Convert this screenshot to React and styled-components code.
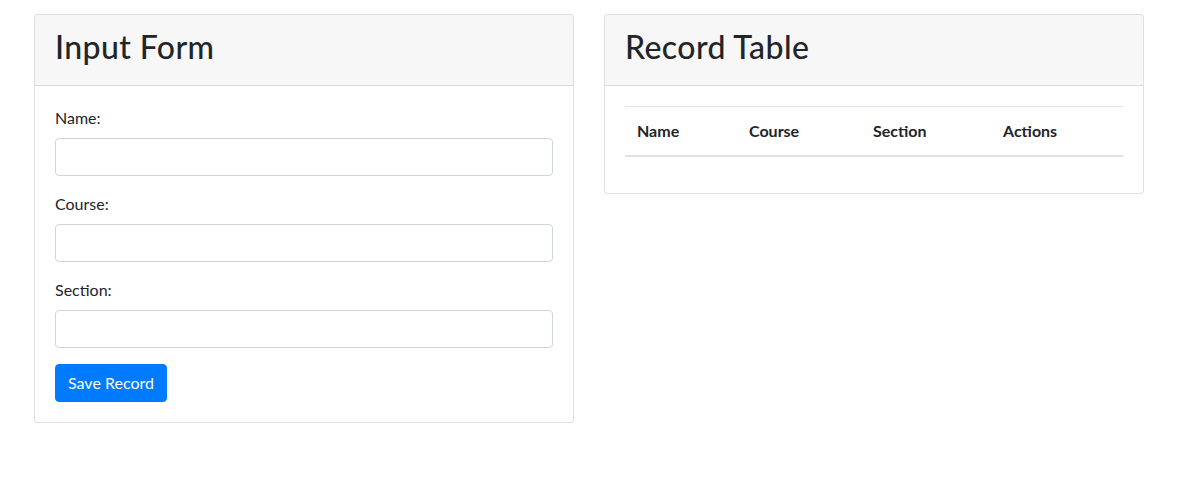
import React from "react";
import styled, { createGlobalStyle } from "styled-components";

const Global = createGlobalStyle`
  * { box-sizing: border-box; }
  body {
    margin: 0;
    font-family: "Segoe UI", Lato, sans-serif;
    font-size: 16px;
    line-height: 1.5;
    color: #212529;
    background: #fff;
  }
`;

const Container = styled.div`
  width: 1140px;
  padding: 14px 15px 0;
  margin-left: 19px;
`;

const Row = styled.div`
  display: grid;
  grid-template-columns: 540px 540px;
  column-gap: 30px;
  align-items: start;
`;

const Card = styled.div`
  border: 1px solid rgba(0, 0, 0, 0.125);
  border-radius: 4px;
  background: #fff;
  overflow: hidden;
`;

const CardHeader = styled.div`
  background: rgba(0, 0, 0, 0.03);
  border-bottom: 1px solid rgba(0, 0, 0, 0.125);
  padding: 13px 20px 11px;
`;

const Title = styled.h2`
  margin: 0 0 8px;
  font-size: 32px;
  font-weight: 500;
  letter-spacing: 0.4px;
  line-height: 1.2;
`;

const CardBody = styled.div`
  padding: 20px;
`;

const FormGroup = styled.div`
  margin-bottom: 16px;
`;

const Label = styled.label`
  display: block;
  margin-bottom: 8px;
  font-size: 16px;
`;

const Input = styled.input`
  display: block;
  width: 100%;
  height: 38px;
  padding: 6px 12px;
  font: inherit;
  border: 1px solid #ced4da;
  border-radius: 4px;
  color: #495057;
  outline: none;
`;

const Button = styled.button`
  display: inline-block;
  height: 38px;
  padding: 6px 12px;
  font: inherit;
  color: #fff;
  background: #007bff;
  border: 1px solid #007bff;
  border-radius: 4px;
  cursor: pointer;
`;

const Table = styled.table`
  width: 100%;
  margin-bottom: 16px;
  border-collapse: collapse;
  color: #212529;
`;

const Th = styled.th`
  width: ${(p) => p.$w}px;
  padding: 12px;
  text-align: left;
  font-weight: 700;
  vertical-align: bottom;
  border-top: 1px solid #dee2e6;
  border-bottom: 2px solid #dee2e6;
`;

export default function App() {
  return (
    <>
      <Global />
      <Container>
        <Row>
          <Card>
            <CardHeader>
              <Title>Input Form</Title>
            </CardHeader>
            <CardBody>
              <FormGroup>
                <Label>Name:</Label>
                <Input type="text" />
              </FormGroup>
              <FormGroup>
                <Label>Course:</Label>
                <Input type="text" />
              </FormGroup>
              <FormGroup>
                <Label>Section:</Label>
                <Input type="text" />
              </FormGroup>
              <Button>Save Record</Button>
            </CardBody>
          </Card>
          <Card>
            <CardHeader>
              <Title>Record Table</Title>
            </CardHeader>
            <CardBody>
              <Table>
                <thead>
                  <tr>
                    <Th $w={112}>Name</Th>
                    <Th $w={124}>Course</Th>
                    <Th $w={130}>Section</Th>
                    <Th $w={132}>Actions</Th>
                  </tr>
                </thead>
                <tbody></tbody>
              </Table>
            </CardBody>
          </Card>
        </Row>
      </Container>
    </>
  );
}
